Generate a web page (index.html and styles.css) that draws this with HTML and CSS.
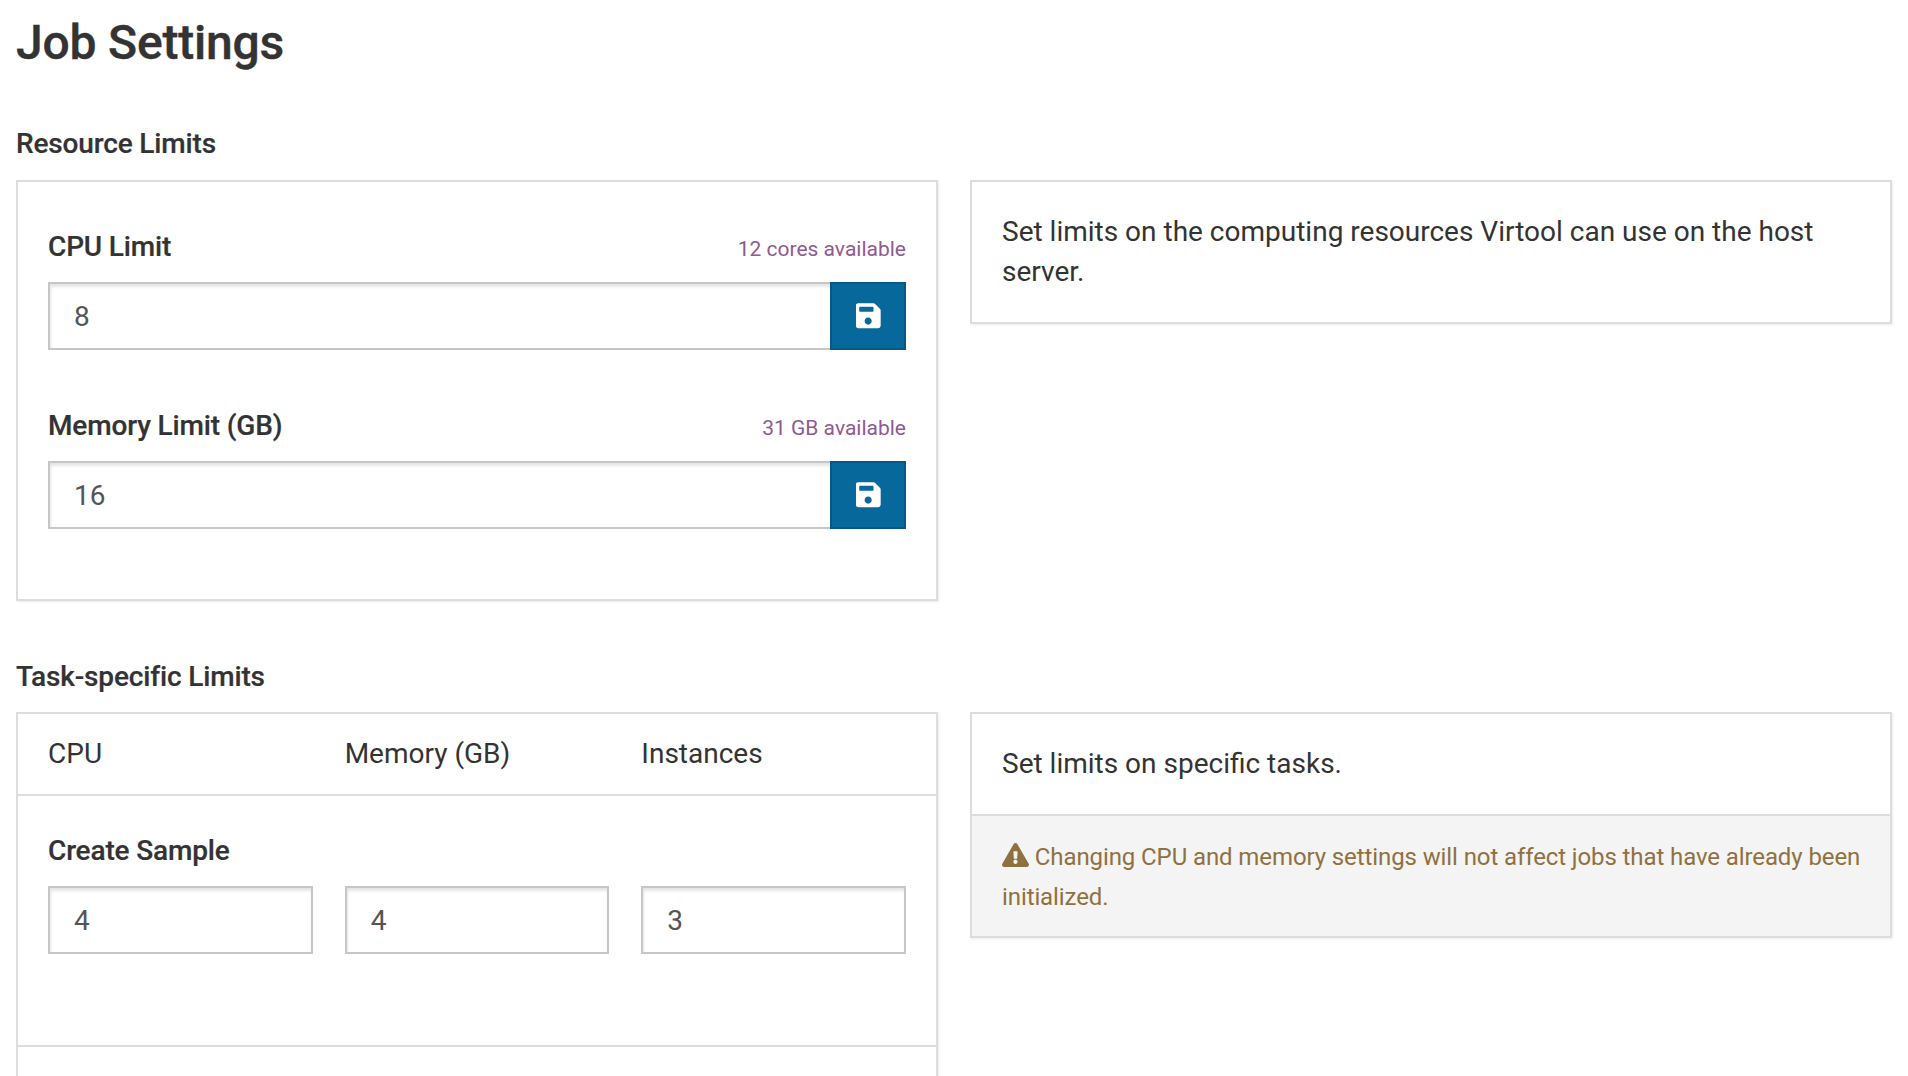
FILE: index.html
```html
<!DOCTYPE html>
<html lang="en">
<head>
<meta charset="utf-8">
<title>Job Settings</title>
<link rel="stylesheet" href="styles.css">
</head>
<body>
<main class="page">
  <h1 class="title">Job Settings</h1>

  <h2 class="section-title first">Resource Limits</h2>
  <section class="row">
    <div class="panel form-panel">
      <div class="field">
        <div class="field-head">
          <label class="label">CPU Limit</label>
          <span class="hint">12 cores available</span>
        </div>
        <div class="input-group">
          <input class="input grow" value="8">
          <button class="save" aria-label="Save">
            <svg class="save-icon" viewBox="6 10 448 512"><path fill="#fff" d="M433.9 129.9l-83.9-83.9A48 48 0 0 0 316.1 32H48C21.5 32 0 53.5 0 80v352c0 26.5 21.5 48 48 48h352c26.500 0 48-21.500 48-48V163.900a48 48 0 0 0-14.100-34zM224 416c-35.300 0-64-28.700-64-64s28.700-64 64-64 64 28.700 64 64-28.700 64-64 64zm96-304.500V172c0 6.600-5.400 12-12 12H76c-6.600 0-12-5.400-12-12V108c0-6.600 5.400-12 12-12h228.500c3.200 0 6.200 1.300 8.500 3.500l3.500 3.500c2.300 2.300 3.500 5.300 3.500 8.500z"/></svg>
          </button>
        </div>
      </div>
      <div class="field">
        <div class="field-head">
          <label class="label">Memory Limit (GB)</label>
          <span class="hint">31 GB available</span>
        </div>
        <div class="input-group">
          <input class="input grow" value="16">
          <button class="save" aria-label="Save">
            <svg class="save-icon" viewBox="6 10 448 512"><path fill="#fff" d="M433.9 129.9l-83.9-83.9A48 48 0 0 0 316.1 32H48C21.5 32 0 53.5 0 80v352c0 26.5 21.5 48 48 48h352c26.500 0 48-21.500 48-48V163.900a48 48 0 0 0-14.100-34zM224 416c-35.300 0-64-28.700-64-64s28.700-64 64-64 64 28.700 64 64-28.700 64-64 64zm96-304.500V172c0 6.600-5.400 12-12 12H76c-6.600 0-12-5.400-12-12V108c0-6.600 5.400-12 12-12h228.500c3.200 0 6.200 1.300 8.500 3.500l3.500 3.500c2.300 2.300 3.500 5.300 3.500 8.500z"/></svg>
          </button>
        </div>
      </div>
    </div>
    <div class="panel info-panel">
      <p class="info-text">Set limits on the computing resources Virtool can use on the host server.</p>
    </div>
  </section>

  <h2 class="section-title second">Task-specific Limits</h2>
  <section class="row">
    <div class="panel task-panel">
      <div class="task-head">
        <span>CPU</span>
        <span>Memory (GB)</span>
        <span>Instances</span>
      </div>
      <div class="task-item">
        <div class="label task-label">Create Sample</div>
        <div class="task-inputs">
          <input class="input" value="4">
          <input class="input" value="4">
          <input class="input" value="3">
        </div>
      </div>
      <div class="task-item-next"></div>
    </div>
    <div class="panel notes-panel">
      <div class="notes-top">Set limits on specific tasks.</div>
      <div class="notes-warning">
        <svg class="warn-icon" viewBox="0 0 576 512"><path fill="#8f713f" d="M569.5 440C588 472 564.8 512 527.900 512H48.100c-36.900 0-60-40-41.600-72L246.400 24c18.500-32 64.700-32 83.200 0l239.900 416zM288 354c-25.400 0-46 20.600-46 46s20.600 46 46 46 46-20.600 46-46-20.600-46-46-46zm-43.700-165.400l7.400 136c.3 6.400 5.600 11.400 12 11.400h48.500c6.400 0 11.700-5 12-11.400l7.400-136c.4-6.900-5.100-12.600-12-12.600h-63.400c-6.900 0-12.400 5.700-12 12.600z"/></svg>
        Changing CPU and memory settings will not affect jobs that have already been initialized.
      </div>
    </div>
  </section>
</main>
</body>
</html>
```

FILE: styles.css
```css
* { box-sizing: border-box; }
html, body { margin: 0; height: 100%; overflow: hidden; background: #fff; }
body { font-family: Roboto, "Liberation Sans", sans-serif; color: #333; font-size: 28px; line-height: 40px; }
.page { padding: 0 16px; }
.title { margin: 0; font-size: 48px; font-weight: 500; line-height: 86px; color: #333; letter-spacing: -0.2px; -webkit-text-stroke: 0.4px #333; }
.section-title { margin: 0; font-size: 28px; font-weight: 500; line-height: 40px; color: #333; letter-spacing: -0.15px; -webkit-text-stroke: 0.2px #333; }
.section-title.first { height: 94px; padding-top: 38px; }
.section-title.second { margin-top: 52px; padding-top: 4px; height: 59px; }
.row { display: grid; grid-template-columns: 922px 922px; column-gap: 32px; align-items: start; }
.panel { border: 2px solid #ddd; background: #fff; box-shadow: 1px 1px 2px rgba(0,0,0,0.08); }
.form-panel { padding: 30px 30px 0; height: 421px; }
.field { margin-bottom: 41px; }
.field-head { display: flex; justify-content: space-between; align-items: baseline; height: 70px; padding-top: 15px; }
.label { font-weight: 500; font-size: 28px; line-height: 40px; letter-spacing: -0.15px; color: #333; -webkit-text-stroke: 0.2px #333; }
.hint { font-size: 21px; line-height: 40px; color: #8f5a93; }
.input-group { display: flex; }
.input { display: block; height: 68px; border: 2px solid #c6c6c6; background: #fff; padding: 0 24px; font: 400 28px/40px Roboto, sans-serif; color: #555; box-shadow: inset 1px 3px 3px rgba(0,0,0,0.1); border-radius: 0; min-width: 0; outline: 0; }
.grow { flex: 1; border-right: 0; }
.save { width: 76px; height: 68px; padding: 0; background: #07699b; border: 2px solid #05598a; display: flex; align-items: center; justify-content: center; border-radius: 0; }
.save-icon { width: 25px; height: 28.6px; display: block; }
.info-panel { padding: 30px; height: 144px; }
.info-text { margin: 0; }
.task-panel { height: 400px; }
.task-head { display: grid; grid-template-columns: repeat(3, 1fr); column-gap: 32px; padding: 20px 30px 0; height: 82px; border-bottom: 2px solid #ddd; }
.task-item { padding: 35px 30px 0; height: 251px; border-bottom: 2px solid #ddd; }
.task-label { height: 55px; }
.task-inputs { display: grid; grid-template-columns: repeat(3, 1fr); column-gap: 32px; }
.task-inputs .input { width: 100%; }
.notes-panel { height: 226px; background: #f4f4f4; }
.notes-top { background: #fff; height: 102px; padding: 30px; border-bottom: 2px solid #ddd; }
.notes-warning { padding: 21px 24px 21px 30px; color: #8f713f; font-size: 24px; letter-spacing: -0.1px; }
.warn-icon { width: 27px; height: 24px; display: inline-block; vertical-align: -2px; }
```
